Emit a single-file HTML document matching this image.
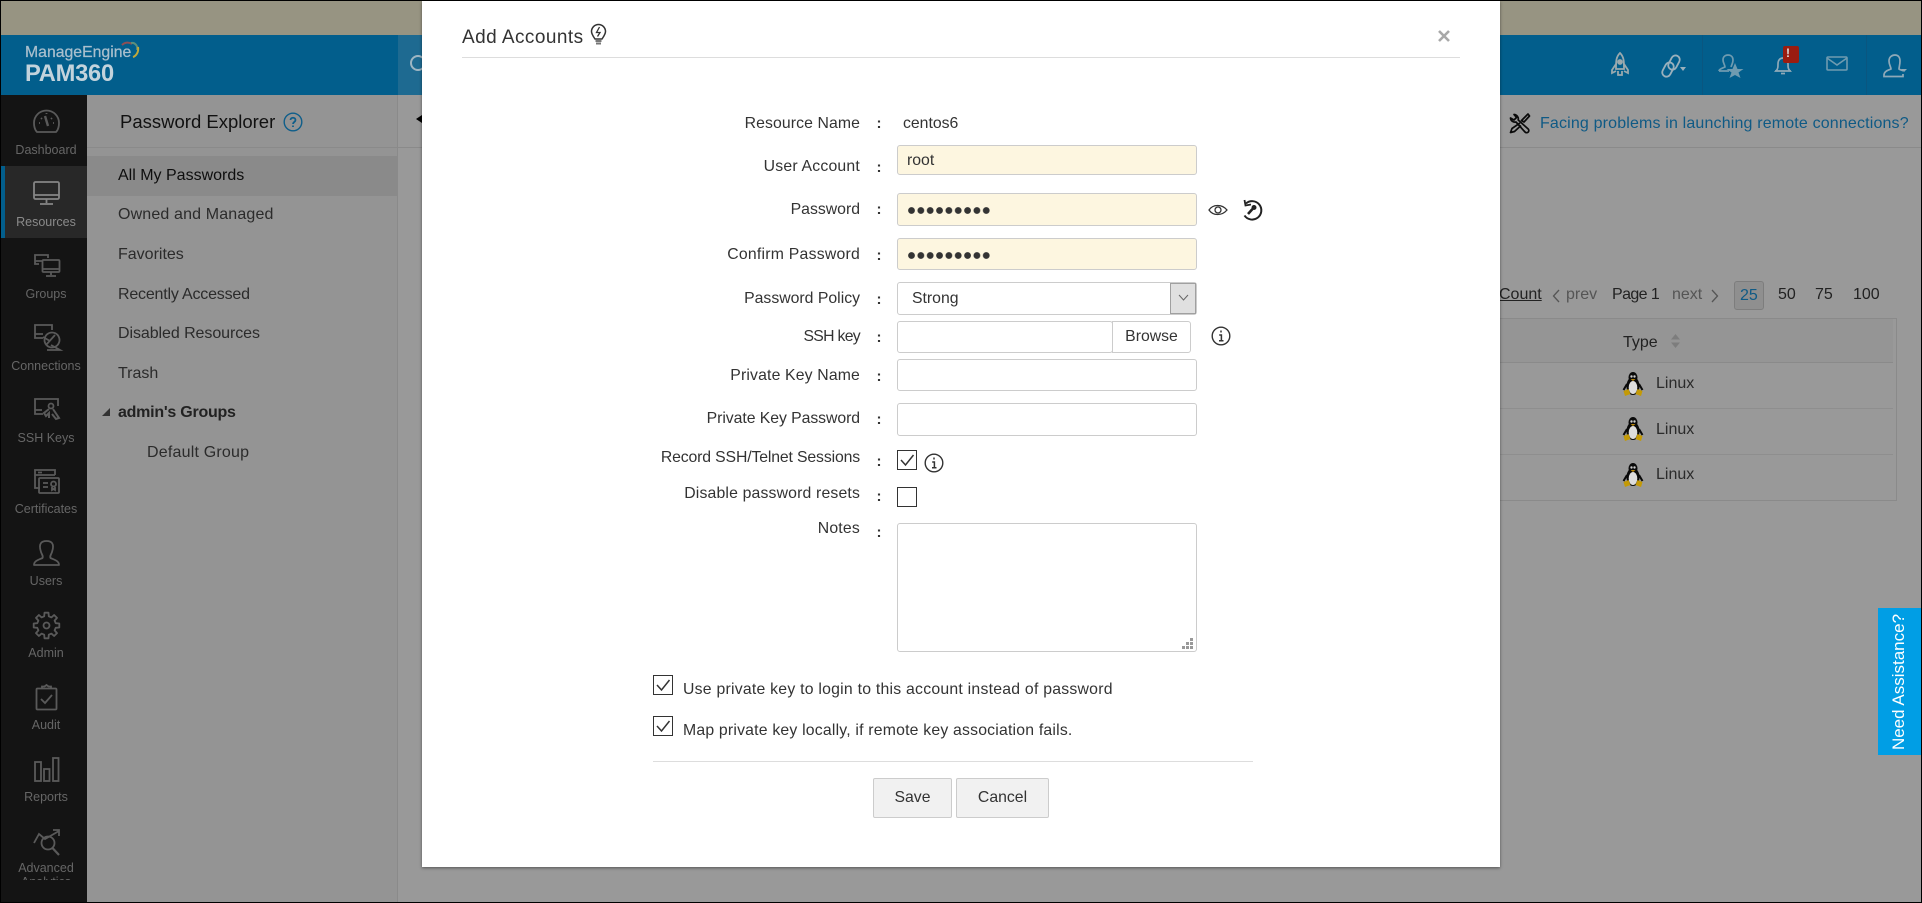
<!DOCTYPE html>
<html><head><meta charset="utf-8"><title>Add Accounts</title>
<style>
*{box-sizing:border-box}
html,body{margin:0;padding:0;width:1922px;height:903px;overflow:hidden;background:#999}
body{position:relative;font-family:"Liberation Sans",sans-serif;font-size:15.8px;color:#333}
.a{position:absolute}
.t{position:absolute;line-height:20px;white-space:nowrap}
.s{position:absolute;left:3px;width:86px;text-align:center;font-size:12.5px;color:#666;line-height:16px;white-space:nowrap}
.n{position:absolute;left:118px;line-height:20px;font-size:16px;color:#2b2b2b;white-space:nowrap}
.l{position:absolute;right:1062px;line-height:20px;white-space:nowrap;color:#333}
.c{position:absolute;left:876.5px;line-height:20px;color:#333;font-weight:bold;font-size:15px}
.i{position:absolute;left:897px;width:300px;border:1px solid #ccc;border-radius:3px;background:#fff}
.y{background:#fdf6e0}
.d{position:absolute;left:908px;width:84px;height:7px;background:radial-gradient(circle at 3.5px 3.5px,#333 3.1px,transparent 3.6px) 0 0/9.35px 7px repeat-x}
.cb{position:absolute;width:20px;height:20px;border:1.3px solid #333;background:#fff}
svg{position:absolute;overflow:visible}
.ic{left:33px;width:27px;height:27px;fill:none;stroke:#5a5a5a;stroke-width:1.8}
.h{fill:none;stroke:#8fa9b8;stroke-width:1.7}
</style></head><body>
<div class="a" style="left:0;top:1px;width:1922px;height:34px;background:#979482"></div>
<div class="a" style="left:0;top:35px;width:1922px;height:60px;background:#025e8c"></div>
<div class="a" style="left:398px;top:35px;width:24px;height:60px;background:#1e6a91"></div>
<div class="a" style="left:1702px;top:35px;width:1px;height:60px;background:#0a5680"></div>
<div class="a" style="left:1866px;top:35px;width:1px;height:60px;background:#0a5680"></div>
<div class="a" style="left:1px;top:95px;width:86px;height:807px;background:#141414"></div>
<div class="a" style="left:87px;top:95px;width:310px;height:807px;background:#949494"></div>
<div class="a" style="left:397px;top:95px;width:1px;height:807px;background:#8a8a8a"></div>
<div class="a" style="left:87px;top:147px;width:1835px;height:1px;background:#8a8a8a"></div>

<div class="t" style="left:25px;top:43px;font-size:15.8px;-webkit-text-stroke:.25px #a9bfcd;color:#a9bfcd">ManageEngine</div>
<div class="t" style="left:25px;top:64px;font-size:23.7px;letter-spacing:-.25px;font-weight:bold;color:#c3d3dc">PAM360</div>
<svg style="left:120px;top:40px" width="20" height="20" fill="none" stroke-width="2"><path d="M2 5C5 2 9 2 12 4" stroke="#8e4f55"/><path d="M11 3C15 2 18 6 17 10" stroke="#5d8f7c"/><path d="M18 7C19 12 16 16 13 17" stroke="#c1a93a"/></svg>
<svg style="left:408px;top:52px" width="14" height="22" fill="none" stroke="#9fb6c3" stroke-width="2"><circle cx="10" cy="11" r="7"/></svg>

<!-- sidebar -->
<div class="a" style="left:1px;top:166px;width:86px;height:72px;background:#282828"></div>
<div class="a" style="left:1px;top:166px;width:4px;height:72px;background:#025e8c"></div>
<svg class="ic" style="top:109px"><path d="M4 23C2 21 1 17.500 1 14A12.500 12.500 0 0 1 26 14C26 17.500 25 21 23 23Z"/><path d="M12 7L15 17" stroke-width="2.400"/><path d="M6 14H7M20 14H21M8 9L9 10M19 9L18 10M13.500 4V5"/></svg>
<svg class="ic" style="top:181px;stroke:#858585"><rect x="1" y="1" width="25" height="17" rx="1.500"/><path d="M1 14H26M13.500 18V22M7 23H20"/></svg>
<svg class="ic" style="top:253px"><path d="M6 11H2V2H15V5"/><rect x="9.500" y="7" width="17" height="12" rx="1"/><path d="M9.500 16H26.500M18 19V22M13 23H23M2 8H9"/></svg>
<svg class="ic" style="top:324px"><path d="M9 14H2V1H19V6M2 10H10M10 14H6"/><circle cx="19" cy="16" r="7.500" transform="rotate(-20 19 16)"/><path d="M13 21L22 11M10 13L17 17M18 21L27 26H14"/></svg>
<svg class="ic" style="top:398px"><path d="M10 16H2V1H25V8M2 12H9"/><circle cx="18" cy="8" r="2.500"/><path d="M16 11L11 15L13 18L16 15V20M20 11L26 20L23 21L19 16" stroke-width="2"/></svg>
<svg class="ic" style="top:468px"><path d="M7 20H2V2H22V7M2 7H22M5 4.500H9"/><rect x="6" y="10" width="20" height="15" rx="1"/><path d="M10 15H15M10 19H15"/><circle cx="20.500" cy="16" r="2.500"/><path d="M19 19V22L20.500 21L22 22V19"/></svg>
<svg class="ic" style="top:540px"><path d="M1 25C1 21 5 20 9.500 18C10.500 16 9 15 8 12C5 3 9 1 13.500 1C18 1 22 3 19 12C18 15 16.500 16 17.500 18C22 20 26 21 26 25Z" stroke-linejoin="round"/></svg>
<svg class="ic" style="top:612px"><circle cx="13.500" cy="13.500" r="3"/><path stroke-linejoin="round" d="M11.200 4.300L11.500 .7H15.500L15.800 4.300L18.400 5.400L21.100 3L24 5.900L21.600 8.600L22.700 11.200L26.300 11.500V15.500L22.700 15.800L21.600 18.400L24 21.100L21.100 24L18.400 21.600L15.800 22.700L15.500 26.300H11.500L11.200 22.700L8.600 21.600L5.900 24L3 21.100L5.400 18.400L4.300 15.800L.7 15.500V11.500L4.300 11.200L5.400 8.600L3 5.900L5.900 3L8.600 5.400Z"/></svg>
<svg class="ic" style="top:684px"><rect x="3.500" y="4.500" width="20" height="21" rx="1"/><path d="M9 4.500V2.500H11.500L13.500 1L15.500 2.500H18V4.500M8 15L12 19L19 11" /></svg>
<svg class="ic" style="top:756px"><rect x="2" y="6" width="6" height="19"/><rect x="11" y="13" width="5.500" height="12"/><rect x="20" y="2" width="5.500" height="23"/></svg>
<svg class="ic" style="top:829px"><path d="M1 14L6 5L12 10L26 2M20 1H26V7"/><circle cx="15" cy="14" r="6.500"/><path d="M19.500 19L26 26" stroke-width="2.200"/></svg>
<div class="s" style="top:142px">Dashboard</div>
<div class="s" style="top:214px;color:#8a8a8a">Resources</div>
<div class="s" style="top:286px">Groups</div>
<div class="s" style="top:358px">Connections</div>
<div class="s" style="top:430px">SSH Keys</div>
<div class="s" style="top:501px">Certificates</div>
<div class="s" style="top:573px">Users</div>
<div class="s" style="top:645px">Admin</div>
<div class="s" style="top:717px">Audit</div>
<div class="s" style="top:789px">Reports</div>
<div class="s" style="top:862px;height:18px;overflow:hidden;white-space:normal;line-height:13.5px">Advanced<br>Analytics</div>

<!-- left panel -->
<div class="t" style="left:120px;top:112px;font-size:18.5px;color:#111">Password Explorer</div>
<svg style="left:283px;top:112px" width="20" height="20" fill="none" stroke="#0f5e8a" stroke-width="1.400"><circle cx="10" cy="10" r="8.800"/><path d="M7.500 8C7.500 5 12.500 5 12.500 8C12.500 10 10 10 10 12M10 13.500V15" stroke-width="1.800"/></svg>
<div class="a" style="left:87px;top:156px;width:310px;height:40px;background:#8a8a8a"></div>
<div class="n" style="top:166px;color:#0e0e0e">All My Passwords</div>
<div class="n" style="top:205px;letter-spacing:.15px">Owned and Managed</div>
<div class="n" style="top:245px">Favorites</div>
<div class="n" style="top:285px;letter-spacing:-.2px">Recently Accessed</div>
<div class="n" style="top:324px;letter-spacing:-.07px">Disabled Resources</div>
<div class="n" style="top:364px">Trash</div>
<svg style="left:102px;top:408px" width="8" height="8"><path d="M8 0V8H0Z" fill="#333"/></svg>
<div class="n" style="top:403px;font-weight:bold;color:#222;letter-spacing:-.25px">admin's Groups</div>
<div class="n" style="top:443px;left:147px;letter-spacing:.2px">Default Group</div>
<svg style="left:416px;top:115px" width="6" height="8"><path d="M0 4L6 0V8Z" fill="#000"/></svg>

<!-- right top -->
<svg style="left:1509px;top:113px" width="21" height="21" fill="none" stroke="#0a0a0a" stroke-width="1.700" stroke-linejoin="round"><path d="M1.500 5A4.500 4.500 0 0 0 7 9L16 19A2.100 2.100 0 0 0 19.200 16L9.200 7A4.500 4.500 0 0 0 5 1.500L7.500 4.500L5 7Z"/><path d="M19 1L20.500 3L15 9L12.500 7.500ZM11 10L3 15.500L1.500 19.500L5.500 18.500L12 12.500"/></svg>
<div class="t" style="left:1540px;top:114px;font-size:16px;letter-spacing:.16px;color:#0f5a85">Facing problems in launching remote connections?</div>
<div class="t" style="left:1499px;top:285px;font-size:16px;color:#222;text-decoration:underline">Count</div>
<svg style="left:1552px;top:288px" width="9" height="15" fill="none" stroke="#555" stroke-width="1.300"><path d="M7 2L1.500 8L7 14"/></svg>
<div class="t" style="left:1566px;top:285px;font-size:16px;color:#555">prev</div>
<div class="t" style="left:1612px;top:285px;font-size:16px;letter-spacing:-.6px;color:#222">Page 1</div>
<div class="t" style="left:1672px;top:285px;font-size:16px;color:#555">next</div>
<svg style="left:1710px;top:288px" width="9" height="15" fill="none" stroke="#555" stroke-width="1.300"><path d="M2 2L7.500 8L2 14"/></svg>
<div class="a" style="left:1734px;top:281px;width:30px;height:29px;border:1px solid #7d7d7d;border-radius:3px;background:#8f8f8f"></div>
<div class="t" style="left:1740px;top:286px;font-size:16px;color:#0f5a85">25</div>
<div class="t" style="left:1778px;top:285px;font-size:16px;color:#222">50</div>
<div class="t" style="left:1815px;top:285px;font-size:16px;color:#222">75</div>
<div class="t" style="left:1853px;top:285px;font-size:16px;color:#222">100</div>

<!-- table -->
<div class="a" style="left:1500px;top:318px;width:397px;height:183px;border:1px solid #8a8a8a;border-left:0;background:#999"></div>
<div class="a" style="left:1500px;top:319px;width:393px;height:44px;background:#959595;border-bottom:1px solid #8a8a8a"></div>
<div class="a" style="left:1500px;top:408px;width:393px;height:1px;background:#8e8e8e"></div>
<div class="a" style="left:1500px;top:454px;width:393px;height:1px;background:#8e8e8e"></div>
<div class="t" style="left:1623px;top:333px;font-size:16px;color:#222">Type</div>
<svg style="left:1671px;top:334px" width="9" height="15" fill="#7d7d7d"><path d="M4.500 0L9 5.500H0ZM0 8.500H9L4.500 14Z"/></svg>
<svg style="left:0;top:0;width:0;height:0"><defs><g id="tux"><ellipse cx="10" cy="14" rx="6.500" ry="9" fill="#0a0a0a"/><ellipse cx="10" cy="5.500" rx="4.500" ry="5.500" fill="#0a0a0a"/><path d="M4 12L0.500 18M16 12L19.500 18" stroke="#0a0a0a" stroke-width="2"/><ellipse cx="10" cy="15.500" rx="4.300" ry="6.500" fill="#ddd"/><circle cx="8.500" cy="4.500" r="1.200" fill="#ccc"/><circle cx="11.500" cy="4.500" r="1.200" fill="#ccc"/><path d="M7.500 7H12.500L10 9Z" fill="#b8860b"/><path d="M.5 19L5.500 17L7.500 22L2 24ZM19.500 19L14.500 17L12.500 22L18 24Z" fill="#c49a06"/></g></defs></svg>
<svg style="left:1623px;top:372px" width="20" height="25"><use href="#tux"/></svg>
<svg style="left:1623px;top:417px" width="20" height="25"><use href="#tux"/></svg>
<svg style="left:1623px;top:463px" width="20" height="25"><use href="#tux"/></svg>
<div class="t" style="left:1656px;top:374px;font-size:16px;color:#2b2b2b">Linux</div>
<div class="t" style="left:1656px;top:420px;font-size:16px;color:#2b2b2b">Linux</div>
<div class="t" style="left:1656px;top:465px;font-size:16px;color:#2b2b2b">Linux</div>

<div class="a" style="left:1878px;top:608px;width:43px;height:147px;background:#009ee5"></div>
<div class="a" style="left:1878px;top:608px;width:43px;height:147px;display:flex;align-items:center;justify-content:center"><span style="transform:rotate(-90deg);white-space:nowrap;color:#fff;font-size:17px;display:block">Need Assistance?</span></div>

<!-- header icons -->
<svg style="left:1611px;top:52px" width="18" height="26" fill="none" stroke="#9aa9ae" stroke-width="1.800"><path d="M9 1C5 5 5 9 5 17H13C13 9 13 5 9 1ZM5 12L1 18V21L5 19M13 12L17 18V21L13 19M7 19V23H11V19"/><circle cx="9" cy="10" r="2" fill="#9aa9ae"/></svg>
<svg style="left:1661px;top:54px" width="26" height="24" fill="none" stroke="#9ab0bc" stroke-width="1.800"><rect x="9" y="1" width="8.500" height="15" rx="4.250" transform="rotate(28 13 8)"/><rect x="3" y="8" width="8.500" height="15" rx="4.250" transform="rotate(28 7 15)"/><path d="M19 13H25L22 17Z" fill="#9ab0bc" stroke="none"/></svg>
<svg style="left:1718px;top:54px" width="26" height="24" class="h" ><path d="M1 17C1 15 5 14 7 13C7 11 5 9 5 6C5 2 8 1 10 1C12 1 15 2 15 6C15 9 14 10 13 13M1 17H11" stroke="#6f9bb0"/><path d="M17 9L19.500 15H25.500L20.500 18.500L22.500 24L17 21L11.500 24L13.500 18.500L8.500 15H14.500Z" fill="#6f9bb0" stroke="none"/></svg>
<svg style="left:1774px;top:52px" width="18" height="24" class="h"><path d="M2 19C4 17 4 15 4 12C4 8 6 6 9 6C12 6 14 8 14 12C14 15 14 17 16 19ZM1 19H17M7 21.500H11"/></svg>
<div class="a" style="left:1783px;top:46px;width:16px;height:17px;background:#9a1c10;border-radius:2px;color:#ddd;font:bold 12px/14px 'Liberation Sans',sans-serif;padding-left:3px">!</div>
<svg style="left:1826px;top:56px" width="22" height="16" fill="none" stroke="#6f9bb0" stroke-width="1.600"><rect x="1" y="1" width="20" height="13" rx="1"/><path d="M1 2L11 9L21 2"/></svg>
<svg style="left:1883px;top:54px" width="26" height="24" class="h"><path d="M1 21C1 17 6 16 8 15C8 13 6 11 6 7C6 3 9 1 12 1C15 1 17 3 17 7C17 11 16 13 16 15C17 16 19 16 20 17M1 21V22.500H20V20"/><path d="M18 15H24L21 18Z" fill="#8fa9b8" stroke="none"/></svg>

<!-- black frame -->
<div class="a" style="left:0;top:0;width:1922px;height:1px;background:#000"></div>
<div class="a" style="left:0;top:0;width:1px;height:903px;background:#000"></div>
<div class="a" style="left:1921px;top:0;width:1px;height:903px;background:#000"></div>
<div class="a" style="left:0;top:902px;width:1922px;height:1px;background:#000"></div>

<!-- modal -->
<div class="a" style="left:422px;top:1px;width:1078px;height:866px;background:#fff;box-shadow:0 1px 3px rgba(0,0,0,.45)"></div>
<div class="t" style="left:462px;top:28px;font-size:19px;letter-spacing:.45px;color:#333">Add Accounts</div>
<svg style="left:590px;top:23px" width="18" height="22" fill="none" stroke="#333" stroke-width="1.500"><path d="M5 16C3 13 1.500 11 1.500 8.500A7 7 0 0 1 15.500 8.500C15.500 11 14 13 12 16Z"/><path d="M9.500 4L6.500 9.500H10L7.500 13.500" stroke-width="1.300"/><path d="M5.500 18H11.500M6 20.500H11" stroke="#777" stroke-width="2"/></svg>
<div class="a" style="left:462px;top:57px;width:998px;height:1px;background:#ddd"></div>
<svg style="left:1438px;top:30px" width="12" height="12" fill="none" stroke="#a8a8a8" stroke-width="2.600"><path d="M1 1L11 11M11 1L1 11"/></svg>

<div class="l" style="top:114px;letter-spacing:.1px">Resource Name</div><div class="c" style="top:114px">:</div>
<div class="t" style="left:903px;top:114px">centos6</div>
<div class="l" style="top:157px;letter-spacing:.2px">User Account</div><div class="c" style="top:158px">:</div>
<div class="i y" style="top:145px;height:30px"></div>
<div class="t" style="left:907px;top:151px">root</div>
<div class="l" style="top:200px">Password</div><div class="c" style="top:200px">:</div>
<div class="i y" style="top:193px;height:33px"></div>
<div class="l" style="top:245px;letter-spacing:.23px">Confirm Password</div><div class="c" style="top:246px">:</div>
<div class="i y" style="top:238px;height:32px"></div>
<div class="d" style="top:206.5px"></div>
<div class="d" style="top:251.5px"></div>
<svg style="left:1208px;top:203px" width="20" height="14" fill="none" stroke="#333" stroke-width="1.300"><path d="M1 7C5 1 14 1 19 7C14 13 5 13 1 7Z"/><circle cx="10" cy="7" r="3"/></svg>
<svg style="left:1241px;top:198px" width="22" height="24" fill="none" stroke="#222" stroke-width="2"><path d="M5 5.500A9.200 9.200 0 1 1 3.500 17.500"/><path d="M3.500 2L4.500 7.500L10 6.500" stroke-width="1.800"/><circle cx="13" cy="9.500" r="2.500" fill="#222" stroke="none"/><path d="M11.500 11L7 16" stroke-width="2.600"/></svg>

<div class="l" style="top:289px">Password Policy</div><div class="c" style="top:290px">:</div>
<div class="i" style="top:282px;height:33px"></div>
<div class="t" style="left:912px;top:289px">Strong</div>
<div class="a" style="left:1170px;top:283px;width:26px;height:31px;background:#e0e0e0;border:1.500px solid #a0a0a0"></div>
<svg style="left:1178px;top:294px" width="11" height="7" fill="none" stroke="#666" stroke-width="1"><path d="M1 1L5.500 6L10 1"/></svg>

<div class="l" style="top:327px;letter-spacing:-.7px">SSH key</div><div class="c" style="top:328px">:</div>
<div class="i" style="top:321px;height:32px;width:216px"></div>
<div class="a" style="left:1112px;top:321px;width:79px;height:32px;border:1px solid #ccc;border-radius:0 3px 3px 0;text-align:center;line-height:30px;color:#333">Browse</div>
<svg style="left:1211px;top:326px" width="20" height="20" fill="none" stroke="#333" stroke-width="1.400"><circle cx="10" cy="10" r="8.800"/><path d="M10 4.500V6.500M8.200 9H10.400V14.500M8 14.800H12.500" stroke-width="1.500"/></svg>

<div class="l" style="top:366px;letter-spacing:.15px">Private Key Name</div><div class="c" style="top:367px">:</div>
<div class="i" style="top:359px;height:32px"></div>
<div class="l" style="top:409px;letter-spacing:-.06px">Private Key Password</div><div class="c" style="top:410px">:</div>
<div class="i" style="top:403px;height:33px"></div>
<div class="l" style="top:448px;letter-spacing:-.14px">Record SSH/Telnet Sessions</div><div class="c" style="top:452px">:</div>
<div class="cb" style="left:897px;top:450px"></div>
<svg style="left:900px;top:453px" width="15" height="14" fill="none" stroke="#333" stroke-width="1.500"><path d="M1 7L5.500 12L13.500 2"/></svg>
<svg style="left:924px;top:453px" width="20" height="20" fill="none" stroke="#333" stroke-width="1.400"><circle cx="10" cy="10" r="8.800"/><path d="M10 4.500V6.500M8.200 9H10.400V14.500M8 14.800H12.500" stroke-width="1.500"/></svg>
<div class="l" style="top:484px;letter-spacing:.16px">Disable password resets</div><div class="c" style="top:487px">:</div>
<div class="cb" style="left:897px;top:487px"></div>
<div class="l" style="top:519px;letter-spacing:.2px">Notes</div><div class="c" style="top:523px">:</div>
<div class="i" style="top:523px;height:129px"></div>
<svg style="left:1181px;top:638px" width="12" height="12" fill="#999"><path d="M9 0h3v3H9zM5 4h3v3H5zM9 4h3v3H9zM1 8h3v3H1zM5 8h3v3H5zM9 8h3v3H9z"/></svg>

<div class="cb" style="left:653px;top:675px"></div>
<svg style="left:656px;top:678px" width="15" height="14" fill="none" stroke="#333" stroke-width="1.500"><path d="M1 7L5.500 12L13.500 2"/></svg>
<div class="t" style="left:683px;top:680px;letter-spacing:.24px">Use private key to login to this account instead of password</div>
<div class="cb" style="left:653px;top:716px"></div>
<svg style="left:656px;top:719px" width="15" height="14" fill="none" stroke="#333" stroke-width="1.500"><path d="M1 7L5.500 12L13.500 2"/></svg>
<div class="t" style="left:683px;top:721px;letter-spacing:.2px">Map private key locally, if remote key association fails.</div>
<div class="a" style="left:653px;top:761px;width:600px;height:1px;background:#ddd"></div>
<div class="a" style="left:873px;top:778px;width:79px;height:40px;background:#f1f1f1;border:1px solid #ccc;border-radius:2px;text-align:center;line-height:38px">Save</div>
<div class="a" style="left:956px;top:778px;width:93px;height:40px;background:#f1f1f1;border:1px solid #ccc;border-radius:2px;text-align:center;line-height:38px">Cancel</div>
</body></html>
